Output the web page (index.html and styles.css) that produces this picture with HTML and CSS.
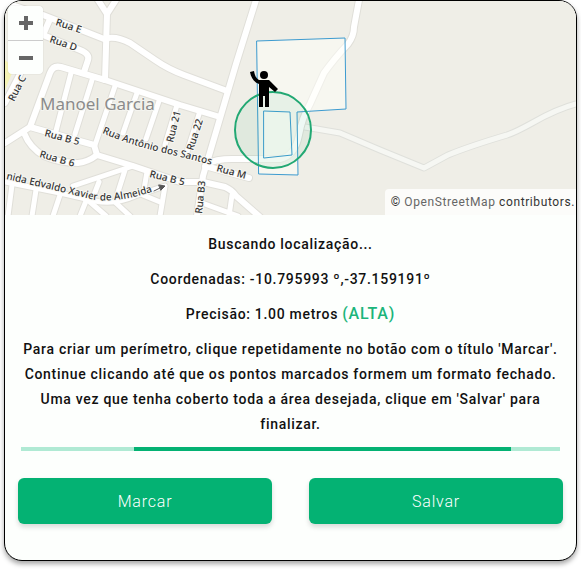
FILE: index.html
```html
<!DOCTYPE html>
<html lang="pt-BR">
<head>
  <meta charset="UTF-8" />
  <meta name="viewport" content="width=device-width, initial-scale=1.0"/>
  <title>Marcar perímetro</title>
  <link rel="stylesheet" href="styles.css">
</head>
<body>
  <div class="card">
    <!-- Mapa -->
    <div class="map">
      <svg class="map-svg" viewBox="5 1 571 214" preserveAspectRatio="xMidYMid slice" aria-label="Mapa">
        <defs>
          <g id="ruas">
            <path d="M98 0L107 14L105 80M116 0L107 14" />
            <path d="M5 3L43 15L104 39Q115 35 130 43L155 60Q168 69 184 75L227 91" />
            <path d="M50 19L43 35L80 50Q90 54 88 60L84 72" />
            <path d="M5 143L30 127L50 73Q53 65 61 67L105 80L180 105L220 117" />
            <path d="M5 103L22 70" />
            <path d="M30 127L94 145L97 155L133 166L180 182L203 182L225 187Q232 190 236 196L260 217" />
            <path d="M24 133Q30 148 44 156Q60 163 78 163Q88 162 97 155" />
            <path d="M256 0L236 64L203 176L197 216" />
            <path d="M206 164Q216 159 232 159L280 159Q295 156 299 135Q302 118 310 104L324 73Q334 59 348 44Q354 36 354 27L359 0" />
            <path d="M205 166L249 178" />
          </g>
          <g id="ruas-menores">
            <path d="M71 73L56 131M92 80L75 134M115 86L95 145M137 93L123 133M159 101L146 139M177 105L165 145M200 111L187 152" />
            <path d="M5 182L60 193L95 201Q115 205 135 196L165 186L160 216" />
            <path d="M73 186L133 166M99 182L92 200M125 170L118 192M147 172L143 195L160 202" />
            <path d="M12 185L8 216M36 190L32 216M60 195L53 216M86 201L80 216M90 202L106 216M116 203L130 216" />
            <path d="M232 195L229 216M202 203L238 216" />
          </g>
          <path id="trilha" d="M305 127L340 133L380 150L424 168Q435 162 448 155Q470 146 507 135C528 128 545 112 576 104" />
          <path id="linha-santos" d="M102 133Q130 145 160 152T216 166" />
          <path id="linha-avenida" d="M6 179Q50 189 95 200Q125 203 165 187" />
        </defs>

        <path class="area-amarela" d="M5 60L14 68L5 90Z" />

        <use href="#trilha" class="trail-border" />
        <use href="#trilha" class="trail-fill" />
        <use href="#ruas-menores" class="minor-border" />
        <use href="#ruas" class="road-border" />
        <use href="#ruas-menores" class="minor-fill" />
        <use href="#ruas" class="road-fill" />

        <!-- Nomes das ruas -->
        <g class="street">
          <text transform="translate(55 25) rotate(18)">Rua E</text>
          <text transform="translate(49 42) rotate(19)">Rua D</text>
          <text transform="translate(14 102) rotate(-63)">Rua C</text>
          <text transform="translate(44 136) rotate(15)">Rua B 5</text>
          <text transform="translate(39 157) rotate(16)">Rua B 6</text>
          <text transform="translate(149 177) rotate(14)">Rua B 5</text>
          <text transform="translate(173 143) rotate(-76)">Rua 21</text>
          <text transform="translate(193 151) rotate(-72)">Rua 22</text>
          <text transform="translate(202 214) rotate(-84)">Rua B3</text>
          <text transform="translate(216 171) rotate(15)">Rua M</text>
          <text><textPath href="#linha-santos">Rua Antônio dos Santos</textPath></text>
          <text><textPath href="#linha-avenida">nida Edvaldo Xavier de Almeida</textPath></text>
        </g>
        <path class="seta" d="M154 191L162 187M159 185L165 186L161 190Z" />
        <text class="place" x="40" y="110">Manoel Garcia</text>

        <!-- Perímetros já salvos -->
        <path class="perimetro" d="M257 41L345 38L346 109L297 112L298 175L259 174Z" />
        <path class="perimetro" d="M264 111L290 112L292 155L264 158Z" />
        <circle class="precisao" cx="273" cy="130" r="38" />

        <!-- Posição atual -->
        <g class="pessoa">
          <circle cx="264" cy="75" r="4" />
          <path d="M259 80H269L278 89L275 92L269 87V107H265V96H263V107H259V84C254 82 251 78 250 72L254 71C255 76 256 78 259 80Z" />
        </g>
      </svg>

      <div class="zoom">
        <button type="button" aria-label="Aproximar"><svg viewBox="0 0 14 14"><path d="M7 0V14M0 7H14" /></svg></button>
        <button type="button" aria-label="Afastar"><svg viewBox="0 0 14 14"><path d="M0 7H14" /></svg></button>
      </div>
      <div class="attribution">© <a href="#">OpenStreetMap</a> contributors.</div>
    </div>

    <!-- Informações -->
    <div class="info">
      <p>Buscando localização...</p>
      <p>Coordenadas: -10.795993 º,-37.159191º</p>
      <p>Precisão: 1.00 metros <span class="alta">(ALTA)</span></p>
      <p>Para criar um perímetro, clique repetidamente no botão com o título 'Marcar'. Continue clicando até que os pontos marcados formem um formato fechado. Uma vez que tenha coberto toda a área desejada, clique em 'Salvar' para finalizar.</p>
      <div class="progress" role="progressbar" aria-label="Buscando localização">
        <div class="progress-bar"></div>
      </div>
    </div>

    <div class="actions">
      <button type="button" class="btn">Marcar</button>
      <button type="button" class="btn">Salvar</button>
    </div>
  </div>
</body>
</html>
```

FILE: styles.css
```css
* {
  box-sizing: border-box;
}

body {
  margin: 0;
  background: #fff;
  font-family: Roboto, "Liberation Sans", sans-serif;
  color: #111;
}

.card {
  margin: 0 4px 8px;
  border: 1px solid #000;
  border-radius: 18px;
  background: #fdfffd;
  overflow: hidden;
  box-shadow: 0 3px 5px rgba(0,0,0,0.35);
}

/* Mapa */
.map {
  position: relative;
  height: 214px;
  background: #efeee7;
  overflow: hidden;
}

.map-svg {
  display: block;
  width: 100%;
  height: 100%;
  fill: none;
  stroke-linejoin: round;
  stroke-linecap: round;
}

.road-border {
  stroke: #e0dfd9;
  stroke-width: 8px;
}

.road-fill {
  stroke: #fff;
  stroke-width: 6px;
}

.minor-border {
  stroke: #e0dfd9;
  stroke-width: 7px;
}

.minor-fill {
  stroke: #fff;
  stroke-width: 5px;
}

.trail-border {
  stroke: #dfe0db;
  stroke-width: 7px;
}

.trail-fill {
  stroke: #f6f7f3;
  stroke-width: 5px;
}

.area-amarela {
  fill: #f5f3b5;
}

.street {
  font-family: "Noto Sans", sans-serif;
  font-size: 10px;
  font-weight: 500;
  fill: #333;
  stroke: #f8f8f4;
  stroke-width: 2px;
  paint-order: stroke;
}

.place {
  font-family: "Noto Sans", sans-serif;
  font-size: 17px;
  fill: #8b8b8b;
  stroke: #f5f5f0;
  stroke-width: 2px;
  paint-order: stroke;
}

.seta {
  fill: #555;
  stroke: #555;
}

.perimetro {
  fill: rgba(255,255,250,0.5);
  stroke: #3d9bd0;
  stroke-width: 1px;
}

.precisao {
  fill: rgba(30,170,110,0.07);
  stroke: #22a873;
  stroke-width: 2px;
}

.pessoa {
  fill: #000;
}

.zoom {
  position: absolute;
  top: 5px;
  left: 3px;
  width: 35px;
  border-radius: 4px;
  overflow: hidden;
  box-shadow: 0 0 1px rgba(0,0,0,0.3);
}

.zoom button {
  display: flex;
  align-items: center;
  justify-content: center;
  width: 100%;
  height: 34px;
  padding: 0;
  border: none;
  background: #fdfffd;
  cursor: pointer;
}

.zoom button + button {
  border-top: 1px solid #ccc;
}

.zoom svg {
  width: 14px;
  height: 14px;
  stroke: #666;
  stroke-width: 4px;
}

.attribution {
  position: absolute;
  right: 0;
  bottom: 0;
  padding: 0 1px 0 6px;
  border-radius: 4px 0 0 0;
  background: rgba(255,255,255,0.8);
  font-size: 12px;
  line-height: 26px;
  letter-spacing: 0.05em;
  color: #333;
}

.attribution a {
  color: #666;
  text-decoration: none;
}

/* Informações */
.info {
  padding: 17px 16px 0;
  text-align: center;
}

.info p {
  margin: 0 0 10px;
  font-size: 14px;
  font-weight: 500;
  line-height: 25px;
  letter-spacing: 0.05em;
}

.info .alta {
  font-size: 16px;
  line-height: 20px;
  letter-spacing: 0.05em;
  color: #1bb57b;
}

.progress {
  height: 4px;
  background: #b0ead4;
}

.progress-bar {
  width: 70%;
  height: 100%;
  margin-left: 21%;
  background: #04b273;
}

/* Botões */
.actions {
  display: flex;
  gap: 37px;
  padding: 27px 13px 36px;
}

.btn {
  flex: 1;
  height: 46px;
  border: none;
  border-radius: 6px;
  background: #04b273;
  box-shadow: 0 3px 5px rgba(0,0,0,0.15);
  color: #fff;
  font-family: inherit;
  font-size: 16px;
  font-weight: 300;
  letter-spacing: 0.05em;
  cursor: pointer;
}
```
